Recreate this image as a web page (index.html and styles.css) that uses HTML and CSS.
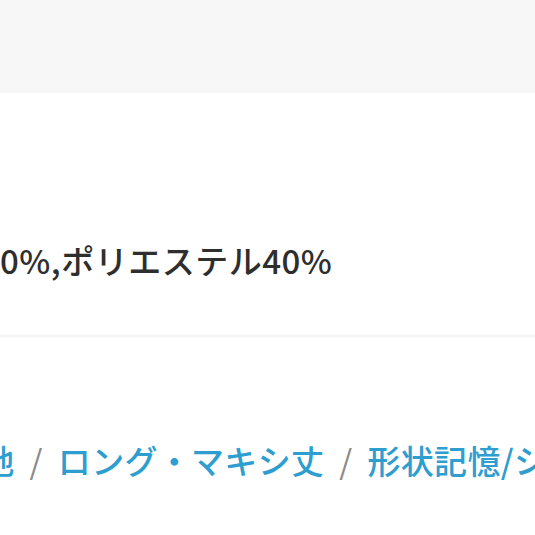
FILE: index.html
```html
<!DOCTYPE html>
<html lang="ja">
<head>
<meta charset="utf-8">
<link rel="stylesheet" href="styles.css">
</head>
<body>
<div class="topbar"></div>
<section class="spec">
  <p class="material">0%,ポリエステル40%</p>
</section>
<section class="tags">
  <p class="taglist"><a class="tag" href="#">無地</a><span class="sep">/</span><a class="tag" href="#">ロング・マキシ丈</a><span class="sep">/</span><a class="tag" href="#">形状記憶/シワになりにくい</a></p>
</section>
</body>
</html>
```
FILE: styles.css
```css
html, body {
  margin: 0;
  padding: 0;
  background: #ffffff;
  overflow: hidden;
  width: 535px;
  height: 535px;
}
body {
  font-family: "Noto Sans CJK JP", "Noto Sans", sans-serif;
  color: #333333;
}
.topbar {
  height: 93px;
  background: #f7f7f7;
}
.spec {
  padding: 143px 0 51px;
  border-bottom: 2px solid #f4f4f4;
}
.material {
  margin: 0;
  font-size: 33px;
  letter-spacing: 0.5px;
  line-height: 48px;
  white-space: nowrap;
  color: #2e2e2e;
  font-weight: 500;
}
.tags {
  padding: 99px 0 0;
}
.taglist {
  margin: 0 0 0 -52px;
  font-size: 33px;
  letter-spacing: 0.3px;
  line-height: 48px;
  white-space: nowrap;
  font-weight: 500;
}
.tag {
  color: #2e9dd0;
  text-decoration: none;
}
.sep {
  display: inline-block;
  color: #8a8a8a;
  font-weight: 400;
  margin: 0 15px;
}
```
